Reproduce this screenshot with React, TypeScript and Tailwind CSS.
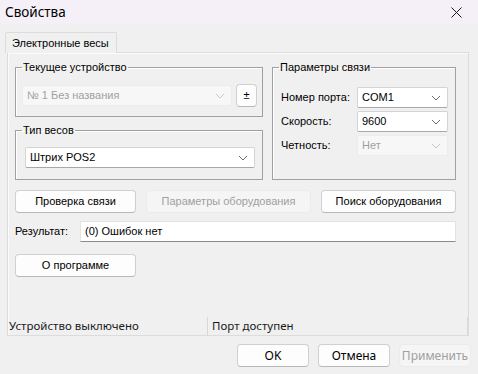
import React from 'react';

/**
 * "Свойства" dialog for the electronic scales driver.
 * Classic Win32 property sheet, single tab.
 */

const ui = { fontFamily: '"Liberation Sans", Arial, sans-serif' };
const seg = { fontFamily: '"Noto Sans", "Open Sans", sans-serif' };

function Chevron({ muted }: { muted?: boolean }) {
  return (
    <svg width="10" height="6" viewBox="0 0 10 6" className="shrink-0">
      <path d="M1 1 L5 5 L9 1" fill="none" stroke={muted ? '#c8c8c8' : '#6a6a6a'} strokeWidth="1" />
    </svg>
  );
}

function Combo({ value, disabled, className }: { value: string; disabled?: boolean; className?: string }) {
  return (
    <div
      className={
        'flex h-[21px] items-center justify-between rounded-[2px] border pl-[4px] pr-[6px] text-[11px] ' +
        (disabled
          ? 'border-[#ececec] bg-[#f7f7f7] text-[#a0a0a0] '
          : 'border-[#d4d4d4] border-b-[#a8a8a8] bg-white text-black ') +
        (className ?? '')
      }
    >
      <span>{value}</span>
      <Chevron muted={disabled} />
    </div>
  );
}

function Btn({ label, disabled, className }: { label: string; disabled?: boolean; className?: string }) {
  return (
    <div
      className={
        'flex h-[23px] items-center justify-center rounded-[4px] border text-[11px] ' +
        (disabled
          ? 'border-[#ebebeb] bg-[#f5f5f5] text-[#a0a0a0] '
          : 'border-[#d0d0d0] border-b-[#b8b8b8] bg-[#fdfdfd] text-black ') +
        (className ?? '')
      }
    >
      {label}
    </div>
  );
}

function Group({ title, className, children }: { title: string; className?: string; children: React.ReactNode }) {
  return (
    <fieldset className={'border border-[#a0a0a0] shadow-[inset_1px_1px_0_#ffffff] ' + (className ?? '')}>
      <legend className="ml-[6px] px-[1px] text-[11px] leading-[13px] text-black">{title}</legend>
      {children}
    </fieldset>
  );
}

export default function App() {
  return (
    <div className="flex h-[374px] w-[478px] flex-col bg-[#f0f0f0]" style={ui}>
      {/* title bar */}
      <div className="flex h-[24px] items-center justify-between bg-[#f5eff7] pl-[5px] pr-[16px]" style={seg}>
        <span className="text-[13.5px] text-black">Свойства</span>
        <svg width="11" height="11" viewBox="0 0 11 11">
          <path d="M0.5 0.5 L10.5 10.5 M10.5 0.5 L0.5 10.5" stroke="#1a1a1a" strokeWidth="1" />
        </svg>
      </div>

      {/* tab strip */}
      <div className="mt-[8px] flex pl-[5px]">
        <div className="relative z-10 -mb-px flex h-[21px] w-[112px] items-center rounded-t-[2px] border border-b-0 border-[#dcdcdc] bg-[#f0f0f0] pl-[6px] text-[11px]">
          Электронные весы
        </div>
      </div>

      {/* tab page */}
      <div className="mx-[7px] flex h-[284px] w-[462px] flex-col border border-[#dcdcdc] bg-[#f0f0f0] shadow-[inset_1px_1px_0_#fbfbfb]">
        <div className="flex gap-[9px] pl-[7px] pr-[12px] pt-[8px]">
          <div className="flex w-[248px] flex-col gap-[7px]">
            <Group title="Текущее устройство" className="h-[56px]">
              <div className="mt-[10px] flex items-center gap-[4px] pl-[6px]">
                <Combo value="№ 1 Без названия" disabled className="w-[210px]" />
                <Btn label="±" className="h-[20px] w-[21px]" />
              </div>
            </Group>
            <Group title="Тип весов" className="h-[56px]">
              <div className="mt-[10px] pl-[9px]">
                <Combo value="Штрих POS2" className="w-[230px]" />
              </div>
            </Group>
          </div>

          <Group title="Параметры связи" className="h-[119px] w-[184px]">
            <div className="mt-[13px] flex flex-col gap-[3px] pl-[8px]">
              {[
                ['Номер порта:', 'COM1', false],
                ['Скорость:', '9600', false],
                ['Четность:', 'Нет', true],
              ].map(([label, value, dis]) => (
                <div key={label as string} className="flex items-center">
                  <span className="w-[76px] text-[11px]">{label as string}</span>
                  <Combo value={value as string} disabled={dis as boolean} className="w-[91px]" />
                </div>
              ))}
            </div>
          </Group>
        </div>

        {/* action buttons */}
        <div className="mt-[10px] flex gap-[10px] pl-[7px]">
          <Btn label="Проверка связи" className="w-[121px]" />
          <Btn label="Параметры оборудования" disabled className="w-[165px]" />
          <Btn label="Поиск оборудования" className="w-[135px]" />
        </div>

        <div className="mt-[8px] flex items-center pl-[7px]">
          <span className="w-[65px] text-[11px]">Результат:</span>
          <div className="flex h-[21px] w-[376px] items-center border border-[#e3e3e3] border-b-[#8a8a8a] bg-white pl-[4px] text-[11px]">
            (0) Ошибок нет
          </div>
        </div>

        <div className="mt-[12px] pl-[7px]">
          <Btn label="О программе" className="w-[121px]" />
        </div>

        {/* status bar */}
        <div className="mt-auto flex h-[18px] text-[11.5px] text-[#1a1a1a]" style={seg}>
          <div className="flex w-[200px] items-center border-r border-[#d8d8d8] pl-[1px]">Устройство выключено</div>
          <div className="flex flex-1 items-center border-r border-[#d8d8d8] pl-[4px]">Порт доступен</div>
        </div>
      </div>

      {/* dialog buttons */}
      <div className="mt-[8px] flex justify-end gap-[9px] pr-[7px]" style={seg}>
        <Btn label="OK" className="w-[72px] border-[#0067c0] border-b-[#0067c0] text-[12px]" />
        <Btn label="Отмена" className="w-[72px] text-[12px]" />
        <Btn label="Применить" disabled className="w-[72px] text-[12px]" />
      </div>
    </div>
  );
}
